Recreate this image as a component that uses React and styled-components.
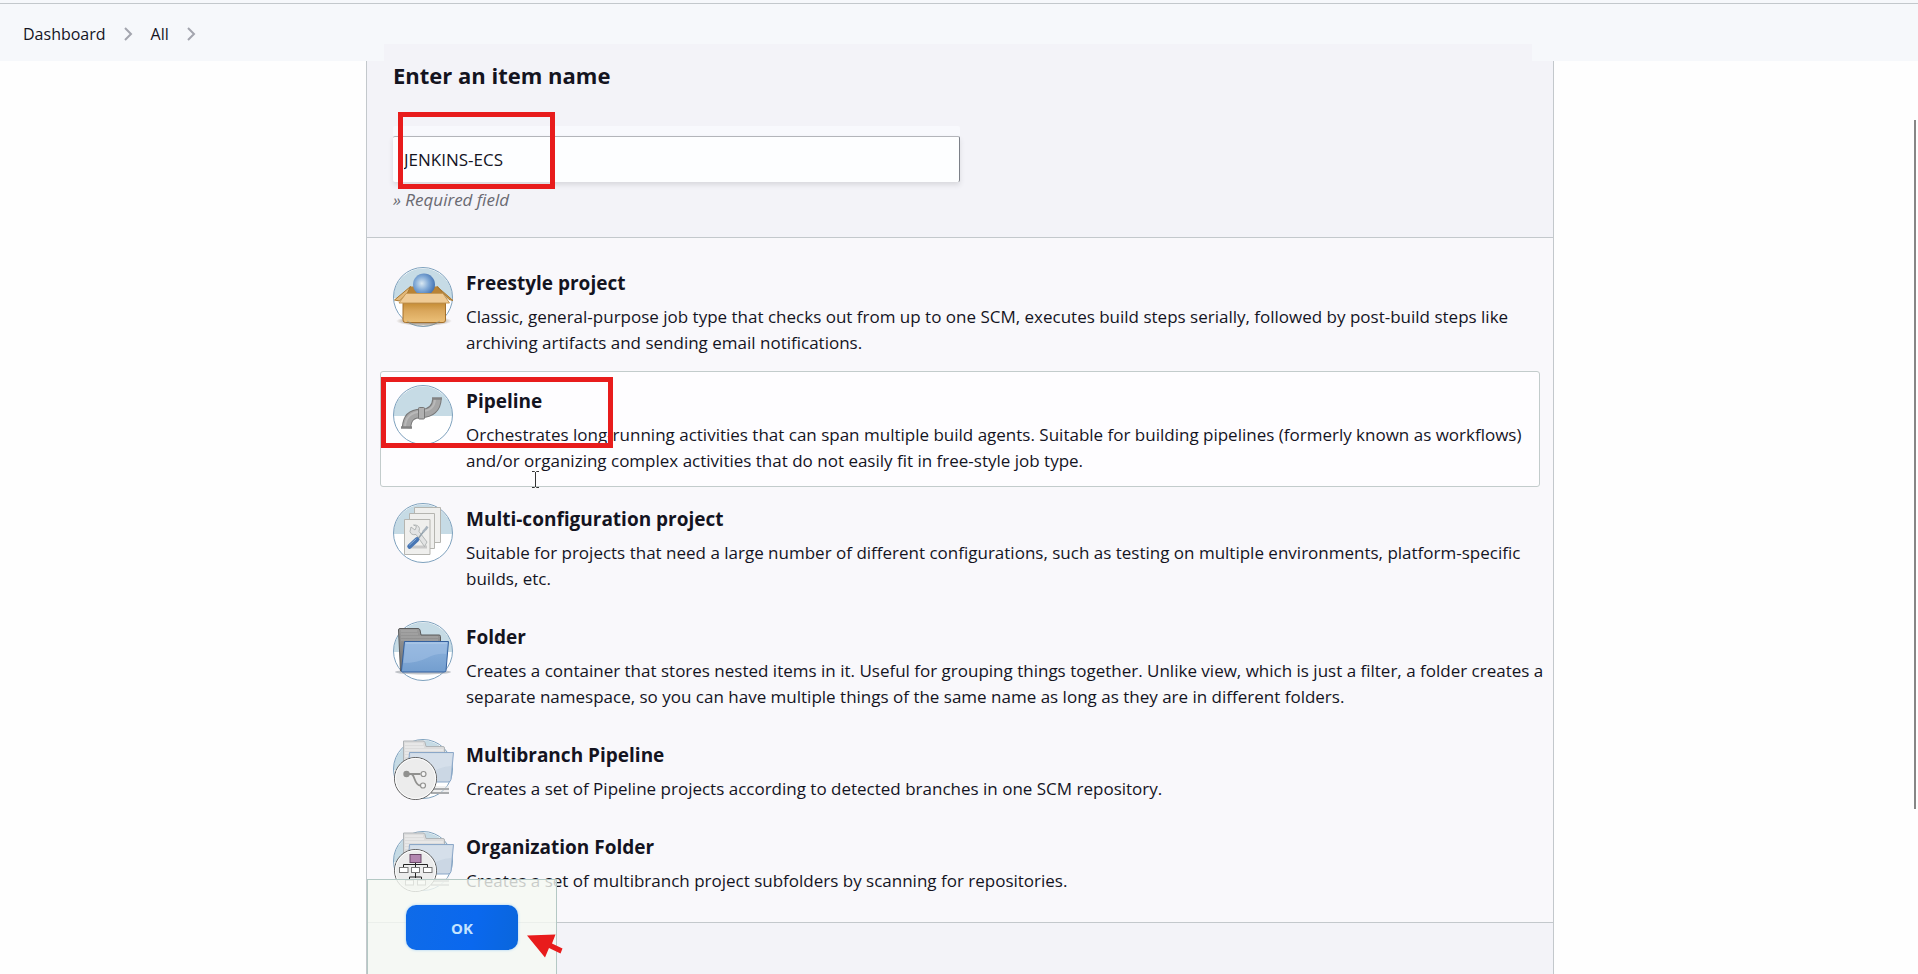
import React, { useState } from "react";
import styled, { createGlobalStyle } from "styled-components";

const GlobalStyle = createGlobalStyle`
  * {
    box-sizing: border-box;
  }

  body {
    margin: 0;
    background: #fefefe;
    color: #14141f;
    font-family: "Open Sans", "Noto Sans", sans-serif;
    font-size: 17px;
    line-height: 26px;
  }
`;

const Page = styled.div`
  display: flex;
  flex-direction: column;
  height: 100vh;
  overflow: hidden;
`;

const Header = styled.header`
  flex: none;
  background: linear-gradient(#f3f3f8, #f3f3f8) 384px 44px / calc(100% - 770px) 17px no-repeat, #f6f8fb;
  padding-top: 3px;
`;

const Breadcrumbs = styled.nav`
  display: flex;
  align-items: center;
  gap: 18px;
  height: 58px;
  border-top: 1px solid #c3c8cc;
  padding: 2px 23px 0;
  font-size: 16px;

  a {
    color: #14141f;
    text-decoration: none;
  }

  svg {
    display: block;
  }
`;

const Main = styled.main`
  flex: 1;
  display: flex;
  min-height: 0;
  padding: 0 364px 0 366px;
`;

const Panel = styled.form`
  position: relative;
  flex: 1;
  display: flex;
  flex-direction: column;
  border: solid #c3c8cc;
  border-width: 0 1px;
  background: #f3f3f8;
`;

const NameSection = styled.section`
  padding: 0 26px 24px;
`;

const Title = styled.label`
  display: block;
  padding-bottom: 47px;
  font-size: 22px;
  font-weight: 700;
  line-height: 28px;
`;

const Field = styled.div`
  position: relative;
  width: 567px;
`;

const NameInput = styled.input`
  display: block;
  width: 100%;
  height: 46px;
  padding: 0 11px;
  border: 0;
  border-top: 1px solid #b3b5ba;
  border-right: 1px solid #7c8088;
  border-radius: 2px;
  outline: none;
  background: #fdfeff;
  box-shadow: 0 3px 5px #d9d9de, 0 -10px 0 #f8f9fd;
  color: #14141f;
  font-family: inherit;
  font-size: 17px;
`;

const Hint = styled.p`
  margin: 5px 0 0;
  color: #6a6a72;
  font-style: italic;
`;

const ItemList = styled.ul`
  display: flex;
  flex-direction: column;
  gap: 2px;
  margin: 0;
  padding: 15px 13px;
  border: solid #c3c8cc;
  border-width: 1px 0;
  background: #f9f8fb;
  list-style: none;
`;

const Item = styled.li`
  position: relative;
  border: 1px solid ${(props) => (props.$active ? "#c3cccc" : "transparent")};
  border-radius: 3px;
  background: ${(props) => (props.$active ? "#fefdff" : "transparent")};

  label {
    display: flex;
    gap: 13px;
    margin-right: -8px;
    padding: 13px 0 12px 12px;
    cursor: pointer;
  }

  input {
    position: absolute;
    opacity: 0;
  }
`;

const ItemIcon = styled.svg`
  flex: none;
  display: block;
  width: 60px;
  height: 60px;
  overflow: visible;
`;

const ItemText = styled.span`
  display: flex;
  flex-direction: column;
  gap: 5px;

  strong {
    font-size: 19px;
    line-height: 32px;
  }
`;

const Marker = styled.div`
  position: absolute;
  top: ${(props) => props.$top}px;
  left: ${(props) => props.$left}px;
  width: ${(props) => props.$width}px;
  height: ${(props) => props.$height}px;
  border: 5px solid #e81c1c;
  pointer-events: none;
`;

const ActionBar = styled.div`
  position: absolute;
  bottom: 0;
  left: 0;
  padding: 25px 38px 24px;
  border: 1px solid #b4c8c4;
  border-bottom: 0;
  background: rgba(245, 249, 242, 0.8);
`;

const OkButton = styled.button`
  display: block;
  width: 112px;
  height: 45px;
  border: 0;
  border-radius: 10px;
  background: linear-gradient(100deg, #0f6be8, #0a68ee 60%, #0a66dc);
  box-shadow: 0 0 3px #9fd0f5;
  color: #c4e4ff;
  font-family: inherit;
  font-size: 15px;
  font-weight: 700;
  cursor: pointer;
`;

const Arrow = styled.svg`
  position: absolute;
  bottom: 16px;
  left: 160px;
`;

const TextCursor = styled.svg`
  position: absolute;
  top: 99px;
  left: 150px;
`;

const ScrollThumb = styled.div`
  position: fixed;
  top: 120px;
  right: 2px;
  bottom: 165px;
  width: 2px;
  background: #868686;
`;

const Chevron = () => (
  <svg width="9" height="14" viewBox="0 0 9 14" fill="none" stroke="#a3a5ae" strokeWidth="2">
    <path d="M1 1l6 6-6 6" />
  </svg>
);

const Disc = () => (
  <>
    <circle cx="30" cy="30" r="29.5" fill="#fff" />
    <path d="M.5 31a29.5 29.5 0 0 1 59 0z" fill="#c6dbe5" />
    <circle cx="30" cy="30" r="29.5" fill="none" stroke="#7fa2be" />
  </>
);

const FreestyleIcon = () => (
  <ItemIcon viewBox="0 0 60 60">
    <defs>
      <radialGradient id="ball" cx=".4" cy=".45" r=".65">
        <stop offset="0" stopColor="#d9e8f2" />
        <stop offset=".5" stopColor="#7fa8d6" />
        <stop offset="1" stopColor="#3c6cae" />
      </radialGradient>
      <linearGradient id="box" x2="0" y2="1">
        <stop offset="0" stopColor="#c58d35" />
        <stop offset=".4" stopColor="#daa75c" />
        <stop offset="1" stopColor="#ecc078" />
      </linearGradient>
      <radialGradient id="shade">
        <stop offset=".6" stopColor="#8b7a66" stopOpacity=".7" />
        <stop offset="1" stopColor="#8b7a66" stopOpacity="0" />
      </radialGradient>
    </defs>
    <Disc />
    <ellipse cx="31" cy="54" rx="28" ry="5" fill="url(#shade)" />
    <path d="M17 19.500h28L51 28H11z" fill="#b98336" />
    <path d="M17.500 19.500L1.500 33l5 1 8-8z" fill="#e3b878" stroke="#a87730" />
    <path d="M44 19.500L60 33.500l-4-1-6.500-7z" fill="#c99444" stroke="#a87730" />
    <circle cx="31" cy="17.500" r="11" fill="url(#ball)" />
    <path d="M10 36h42.500v17q0 2.500-2.500 2.500H12.500Q10 55.500 10 53z" fill="url(#box)" stroke="#a5712c" />
    <path d="M13 26.500h37l6.500 9.500H6z" fill="#efcb96" stroke="#c79a56" />
    <path d="M14 54a28.500 28.500 0 0 0 33 0" fill="none" stroke="#8f9a98" opacity=".6" />
  </ItemIcon>
);

const PipelineIcon = () => (
  <ItemIcon viewBox="0 0 60 60" fill="none">
    <Disc />
    <path d="M13.500 43C14 33 18.500 28.500 28 28.500 38 28.500 43.500 23 44 14" stroke="#777" strokeWidth="9.500" />
    <path d="M13.500 43C14 33 18.500 28.500 28 28.500 38 28.500 43.500 23 44 14" stroke="#a6a6a6" strokeWidth="7.500" />
    <path d="M12 42c.5-9 6-15 16-15.500 9-.5 13.500-4.500 14-12" stroke="#b9b9b9" strokeWidth="2" />
    <path d="M8 42.500h11M39 13.500h10" stroke="#828282" strokeWidth="2.500" />
    <rect x="25.500" y="22.500" width="6" height="11.500" rx="1" fill="#b0b0b0" stroke="#777" />
  </ItemIcon>
);

const MultiConfigIcon = () => (
  <ItemIcon viewBox="0 0 60 60">
    <Disc />
    <g fill="#efefed" stroke="#b5b5b0">
      <path d="M21.500 4.500h26v35h-26z" />
      <path d="M16.500 10.500h25v35h-25z" />
      <path d="M11.500 16.500H37v35H11.500z" />
    </g>
    <path d="M17 44h17" stroke="#c9c9c9" strokeWidth="3" />
    <path d="M18 24l4 3 1.500-3.500-3-1.500q5-.5 6 3.500l-.5 3L34 39l-2.500 4.500L23 31.500q-5 1-6-3z" fill="#e2e3e3" stroke="#a5a9aa" strokeWidth=".8" />
    <path d="M24 37l7-9" stroke="#91a0aa" strokeWidth="1.500" />
    <path d="M30 29l4-4.500M34.500 23.500l-2 3" stroke="#a7b3bd" strokeWidth="2.500" />
    <path d="M16.500 43.500l7.500-7" stroke="#4876b4" strokeWidth="4.500" strokeLinecap="round" />
    <path d="M16.500 42l6.500-6" stroke="#8db0d8" strokeLinecap="round" />
  </ItemIcon>
);

const FolderIcon = () => (
  <ItemIcon viewBox="0 0 60 60">
    <defs>
      <linearGradient id="tab" x2="0" y2="1">
        <stop offset="0" stopColor="#9b9b9b" />
        <stop offset="1" stopColor="#6f6f6f" />
      </linearGradient>
      <linearGradient id="front" x2="0" y2="1">
        <stop offset="0" stopColor="#8fb4de" />
        <stop offset="1" stopColor="#739ecf" />
      </linearGradient>
    </defs>
    <Disc />
    <ellipse cx="30" cy="51" rx="28" ry="2.500" fill="#9aa0a6" opacity=".6" />
    <path d="M5.500 9q0-1.500 1.500-1.500h18q1.500 0 2 1.500l1 5H46q1.500 0 1.500 1.500V50H7.500z" fill="url(#tab)" stroke="#5c5c5c" />
    <path d="M8 10h16M8 13h17M8 16h37M8 19h37" stroke="#b5b5b5" strokeWidth=".7" />
    <path d="M11.500 20.500h44l-2.500 29q0 1.500-2 1.500H9.500q-1 0-1-1.500z" fill="url(#front)" stroke="#34619f" />
    <path d="M12.500 21.500h42L53 33q-9-1-19 4t-23.500 5z" fill="#a3c2e5" opacity=".5" />
    <path d="M12.500 22h41.500" stroke="#b4cdea" />
  </ItemIcon>
);

const FolderStack = ({ children }) => (
  <ItemIcon viewBox="0 0 60 60">
    <Disc />
    <path d="M10.500 2h19.500q1.500 0 2 1.500l1 4H50q1.500 0 1.500 1.500v31H10.500z" fill="#dcdcdc" stroke="#b0b4b7" />
    <path d="M12 5h18M12 8h19M12 11h38M12 14h5M12 17h4" stroke="#f3f3f3" />
    <path d="M16.500 13.500h44l-2.500 27q-.5 2.500-3 2.500H14z" fill="#cbd7e4" stroke="#8ba7c8" />
    <path d="M17.500 14.500h42L58 27q-12 1-20 7t-22 4z" fill="#d9e2ec" opacity=".7" />
    <path d="M40 50h16M38 54h18" stroke="#a9abad" strokeWidth="2" />
    <path d="M40 48h16M38 52h18" stroke="#e3e3e3" />
    <circle cx="22.500" cy="39.500" r="21" fill="#ececec" stroke="#5c5c5c" />
    <circle cx="22.500" cy="39.500" r="20" fill="none" stroke="#fff" />
    {children}
  </ItemIcon>
);

const MultibranchIcon = () => (
  <FolderStack>
    <g fill="none" stroke="#91918f" strokeWidth="1.800">
      <path d="M13 35h14.500M18 35c4 0 3 11 9 11.500" />
      <circle cx="30.500" cy="35" r="2.500" fill="#f5f5f5" strokeWidth="1.200" />
      <circle cx="30" cy="46.500" r="2.500" fill="#f5f5f5" strokeWidth="1.200" />
    </g>
    <circle cx="13.500" cy="35" r="3.200" fill="#91918f" />
  </FolderStack>
);

const OrganizationIcon = () => (
  <FolderStack>
    <path d="M22.500 31v5M10.500 36.500v-3h24v3M22.500 42v5M16.500 49v-3h12v3" fill="none" stroke="#222" />
    <rect x="17" y="23.500" width="11" height="8" fill="#b386b0" stroke="#684866" />
    <g fill="#fff" stroke="#777">
      <rect x="6.500" y="36.500" width="8.500" height="5" />
      <rect x="18.500" y="36.500" width="8" height="5" />
      <rect x="30.500" y="36.500" width="8.500" height="5" />
      <rect x="12.500" y="49" width="8" height="5" />
      <rect x="24.500" y="49" width="8" height="5" />
    </g>
  </FolderStack>
);

const items = [
  {
    name: "Freestyle project",
    icon: FreestyleIcon,
    text: "Classic, general-purpose job type that checks out from up to one SCM, executes build steps serially, followed by post-build steps like archiving artifacts and sending email notifications.",
  },
  {
    name: "Pipeline",
    icon: PipelineIcon,
    text: "Orchestrates long-running activities that can span multiple build agents. Suitable for building pipelines (formerly known as workflows) and/or organizing complex activities that do not easily fit in free-style job type.",
  },
  {
    name: "Multi-configuration project",
    icon: MultiConfigIcon,
    text: "Suitable for projects that need a large number of different configurations, such as testing on multiple environments, platform-specific builds, etc.",
  },
  {
    name: "Folder",
    icon: FolderIcon,
    text: "Creates a container that stores nested items in it. Useful for grouping things together. Unlike view, which is just a filter, a folder creates a separate namespace, so you can have multiple things of the same name as long as they are in different folders.",
  },
  {
    name: "Multibranch Pipeline",
    icon: MultibranchIcon,
    text: "Creates a set of Pipeline projects according to detected branches in one SCM repository.",
  },
  {
    name: "Organization Folder",
    icon: OrganizationIcon,
    text: "Creates a set of multibranch project subfolders by scanning for repositories.",
  },
];

const App = () => {
  const [name, setName] = useState("JENKINS-ECS");
  const [selected, setSelected] = useState("Pipeline");

  return (
    <Page>
      <GlobalStyle />
      <Header>
        <Breadcrumbs>
          <a href="#dashboard">Dashboard</a>
          <Chevron />
          <a href="#all">All</a>
          <Chevron />
        </Breadcrumbs>
      </Header>
      <Main>
        <Panel onSubmit={(e) => e.preventDefault()}>
          <NameSection>
            <Title htmlFor="name">Enter an item name</Title>
            <Field>
              <NameInput id="name" value={name} onChange={(e) => setName(e.target.value)} />
              <Marker $top={-24} $left={5} $width={157} $height={77} />
            </Field>
            <Hint>» Required field</Hint>
          </NameSection>
          <ItemList>
            {items.map(({ name, icon: Icon, text }) => (
              <Item key={name} $active={name === selected}>
                <label>
                  <input
                    type="radio"
                    name="mode"
                    checked={name === selected}
                    onChange={() => setSelected(name)}
                  />
                  <Icon />
                  <ItemText>
                    <strong>{name}</strong>
                    <span>{text}</span>
                  </ItemText>
                </label>
                {name === "Pipeline" && (
                  <>
                    <Marker $top={5} $left={0} $width={232} $height={71} />
                    <TextCursor width="9" height="17" fill="none" stroke="#333">
                      <path d="M1 .5h2.500l1 1 1-1H8M4.500 1v15M1 16.500h2.500l1-1 1 1H8" />
                    </TextCursor>
                  </>
                )}
              </Item>
            ))}
          </ItemList>
          <ActionBar>
            <OkButton type="submit">OK</OkButton>
          </ActionBar>
          <Arrow width="36" height="24" viewBox="0 0 36 24" fill="#e81c1c">
            <path d="M0 1.500L28.500 .5l-3.500 9 10.500 5-2 5-11.500-5.500-4 9.500z" />
          </Arrow>
        </Panel>
      </Main>
      <ScrollThumb />
    </Page>
  );
};

export default App;
